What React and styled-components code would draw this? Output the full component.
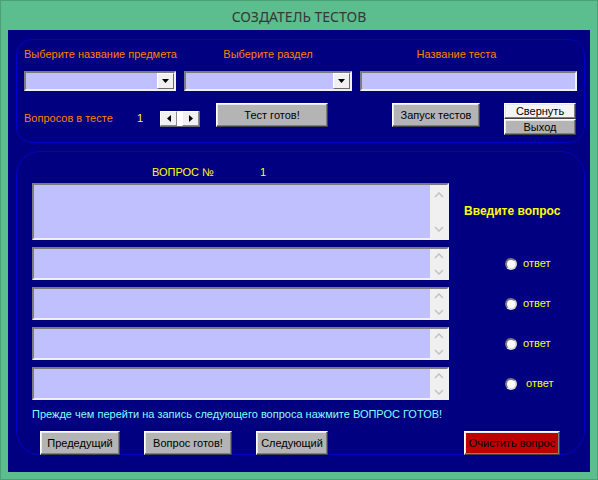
import React from "react";
import styled, { createGlobalStyle } from "styled-components";

const GlobalStyle = createGlobalStyle`
  html, body { margin: 0; padding: 0; }
  body {
    width: 598px; height: 480px; overflow: hidden;
    font-family: "Liberation Sans", Arial, sans-serif;
    font-size: 11px;
  }
  * { box-sizing: border-box; }
`;

const Window = styled.div`
  width: 598px;
  height: 480px;
  background: #5cbd8e;
  border: 1px solid #4aa078;
  display: flex;
  flex-direction: column;
`;

const TitleBar = styled.div`
  height: 29px;
  flex: none;
  display: flex;
  align-items: center;
  justify-content: center;
  font-family: "Noto Sans", "Open Sans", sans-serif;
  font-size: 14px;
  color: #333a36;
  padding-top: 2px;
`;

const Client = styled.div`
  flex: 1;
  margin: 0 7px 7px 7px;
  background: #000080;
  padding: 9px 5px 0 8px;
  display: flex;
  flex-direction: column;
  gap: 8px;
`;

const Group = styled.div`
  border: 1px solid #0000cc;
  border-radius: ${(p) => p.$radius}px;
  display: flex;
  flex-direction: column;
`;

const TopGroup = styled(Group)`
  height: 104px;
  padding: 8px 7px 7px 7px;
`;

const BottomGroup = styled(Group)`
  height: 304px;
  padding: 14px 0 0 15px;
`;

const TopGrid = styled.div`
  display: grid;
  grid-template-columns: 152px 168px 217px;
  column-gap: 8px;
  row-gap: 10px;
  grid-template-rows: 13px 20px;
`;

const Caption = styled.div`
  color: ${(p) => p.$color || "#ff8000"};
  line-height: 13px;
  white-space: nowrap;
  text-align: ${(p) => p.$align || "left"};
  padding-right: ${(p) => p.$pr || 0}px;
  font-weight: ${(p) => (p.$bold ? "bold" : "normal")};
  font-size: ${(p) => p.$size || 11}px;
`;

const Sunken = styled.div`
  border-style: solid;
  border-width: 2px;
  border-color: #7c7c7c #f0f0f0 #f0f0f0 #7c7c7c;
  background: #c0c0ff;
`;

const Combo = styled(Sunken)`
  height: 20px;
  display: flex;
  justify-content: flex-end;
`;

const DropBtn = styled.div`
  width: 17px;
  height: 16px;
  background: #f0f0f0;
  border-style: solid;
  border-width: 1px;
  border-color: #ffffff #6a6a6a #6a6a6a #ffffff;
  display: flex;
  align-items: center;
  justify-content: center;
`;

const Row3 = styled.div`
  margin-top: 12px;
  display: flex;
  align-items: flex-start;
  height: 32px;
`;

const Cell = styled.div`
  width: ${(p) => p.$w}px;
  margin-top: ${(p) => p.$mt || 0}px;
  margin-left: ${(p) => p.$ml || 0}px;
  flex: none;
`;

const Spinner = styled.div`
  width: 40px;
  height: 16px;
  margin-top: 8px;
  display: flex;
  background: #ffffff;
  justify-content: space-between;
  border-bottom: 1px solid #6a6a6a;
  border-right: 1px solid #6a6a6a;
`;

const SpinBtn = styled.div`
  width: 17px;
  height: 15px;
  background: #f0f0f0;
  border-style: solid;
  border-width: 1px;
  border-color: #ffffff #8a8a8a #8a8a8a #ffffff;
  display: flex;
  align-items: center;
  justify-content: center;
`;

const Button = styled.button`
  flex: none;
  width: ${(p) => p.$w}px;
  height: ${(p) => p.$h || 24}px;
  margin-left: ${(p) => p.$ml || 0}px;
  padding: 0;
  font-family: "Liberation Sans", Arial, sans-serif;
  font-size: 11px;
  color: #000000;
  background: ${(p) => p.$bg || "#b4b4b4"};
  border: 1px solid;
  border-color: #ffffff #404040 #404040 #ffffff;
  box-shadow: inset -1px -1px #808080, inset 1px 1px #e8e8e8;
  display: flex;
  align-items: center;
  justify-content: center;
`;

const Stack = styled.div`
  width: 72px;
  margin-left: 24px;
  display: flex;
  flex-direction: column;
  gap: 0;
  flex: none;
`;

const QHeader = styled.div`
  display: flex;
  padding-left: 120px;
  margin-bottom: 4px;
`;

const QGrid = styled.div`
  display: grid;
  grid-template-columns: 417px 1fr;
  grid-template-rows: 57px repeat(4, 33px);
  row-gap: 7px;
`;

const Memo = styled(Sunken)`
  display: flex;
  justify-content: flex-end;
`;

const Scroll = styled.div`
  width: 17px;
  background: #f0f0f0;
  display: flex;
  flex-direction: column;
  justify-content: space-between;
  align-items: center;
  padding: ${(p) => (p.$tall ? "7px 0 6px" : "4px 0 3px")};
`;

const Side = styled.div`
  display: flex;
  align-items: center;
  padding-left: ${(p) => p.$pl}px;
`;

const RadioCircle = styled.span`
  width: 12px;
  height: 12px;
  border-radius: 50%;
  background: #ffffff;
  border: 2px solid;
  border-color: #7a7a7a #d8d8d8 #d8d8d8 #7a7a7a;
  margin-right: ${(p) => p.$gap}px;
  flex: none;
`;

const RadioText = styled.span`
  color: #ffff00;
  line-height: 13px;
`;

const Note = styled.div`
  margin-top: 8px;
  color: #80ffff;
  line-height: 13px;
  white-space: nowrap;
`;

const BottomRow = styled.div`
  margin-top: 10px;
  margin-bottom: -1px;
  padding-left: 8px;
  display: flex;
`;

const Tri = ({ dir }) => {
  const pts = {
    down: "0,0 7,0 3.5,4",
    left: "4,0 4,7 0,3.5",
    right: "0,0 0,7 4,3.5",
  }[dir];
  const w = dir === "down" ? 7 : 4;
  const h = dir === "down" ? 4 : 7;
  return (
    <svg width={w} height={h} viewBox={`0 0 ${w} ${h}`}>
      <polygon points={pts} fill="#000" />
    </svg>
  );
};

const Chevron = ({ up }) => (
  <svg width="10" height="6" viewBox="0 0 10 6">
    <polyline
      points={up ? "1,5 5,1 9,5" : "1,1 5,5 9,1"}
      fill="none"
      stroke="#c4c4c4"
      strokeWidth="1.6"
    />
  </svg>
);

const MemoBox = ({ tall }) => (
  <Memo>
    <Scroll $tall={tall}>
      <Chevron up />
      <Chevron />
    </Scroll>
  </Memo>
);

const Radio = ({ gap = 6 }) => (
  <Side $pl={56}>
    <RadioCircle $gap={gap} />
    <RadioText>ответ</RadioText>
  </Side>
);

export default function App() {
  return (
    <>
      <GlobalStyle />
      <Window>
        <TitleBar>СОЗДАТЕЛЬ ТЕСТОВ</TitleBar>
        <Client>
          <TopGroup $radius={16}>
            <TopGrid>
              <Caption $align="center">Выберите название предмета</Caption>
              <Caption $align="center">Выберите раздел</Caption>
              <Caption $align="center" $pr={24}>Название теста</Caption>
              <Combo>
                <DropBtn><Tri dir="down" /></DropBtn>
              </Combo>
              <Combo>
                <DropBtn><Tri dir="down" /></DropBtn>
              </Combo>
              <Sunken />
            </TopGrid>
            <Row3>
              <Cell $w={113} $mt={9}>
                <Caption>Вопросов в тесте</Caption>
              </Cell>
              <Cell $w={23} $mt={9}>
                <Caption $color="#ffff00">1</Caption>
              </Cell>
              <Spinner>
                <SpinBtn><Tri dir="left" /></SpinBtn>
                <SpinBtn><Tri dir="right" /></SpinBtn>
              </Spinner>
              <Button $w={112} $ml={16}>Тест готов!</Button>
              <Button $w={88} $ml={64}>Запуск тестов</Button>
              <Stack>
                <Button $w={72} $h={16} $bg="#f4f4f4">Свернуть</Button>
                <Button $w={72} $h={16}>Выход</Button>
              </Stack>
            </Row3>
          </TopGroup>

          <BottomGroup $radius={24}>
            <QHeader>
              <Cell $w={108}>
                <Caption $color="#ffff00">ВОПРОС №</Caption>
              </Cell>
              <Caption $color="#ffff00">1</Caption>
            </QHeader>
            <QGrid>
              <MemoBox tall />
              <Side $pl={15}>
                <Caption $color="#ffff00" $bold $size={12}>Введите вопрос</Caption>
              </Side>
              <MemoBox />
              <Radio />
              <MemoBox />
              <Radio />
              <MemoBox />
              <Radio />
              <MemoBox />
              <Radio gap={9} />
            </QGrid>
            <Note>Прежде чем перейти на запись следующего вопроса нажмите ВОПРОС ГОТОВ!</Note>
            <BottomRow>
              <Button $w={80}>Предедущий</Button>
              <Button $w={88} $ml={24}>Вопрос готов!</Button>
              <Button $w={72} $ml={24}>Следующий</Button>
              <Button $w={96} $ml={136} $bg="#c00000">Очистить вопрос</Button>
            </BottomRow>
          </BottomGroup>
        </Client>
      </Window>
    </>
  );
}
